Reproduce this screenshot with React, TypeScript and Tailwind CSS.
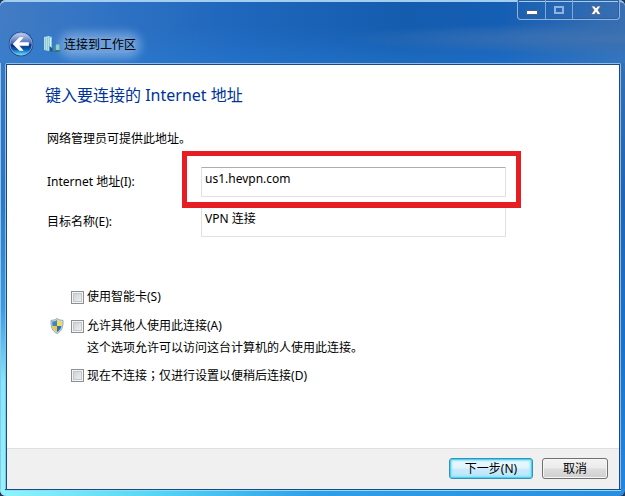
import React from "react";

function BackButton() {
  return (
    <button type="button" aria-label="后退" className="size-[26px] shrink-0">
      <svg viewBox="0 0 26 26" className="size-full">
        <defs>
          <linearGradient id="orb" x1="0" y1="0" x2="0" y2="1">
            <stop offset="0" stopColor="#c4d2ee" />
            <stop offset="0.3" stopColor="#7391cc" />
            <stop offset="0.5" stopColor="#3a62b0" />
            <stop offset="0.53" stopColor="#0a2a7c" />
            <stop offset="0.75" stopColor="#0c5cb8" />
            <stop offset="1" stopColor="#5cecfc" />
          </linearGradient>
        </defs>
        <circle cx="13" cy="13" r="12.3" fill="#1c4688" />
        <circle cx="13" cy="13" r="11.2" fill="url(#orb)" stroke="#8fb0dc" strokeWidth="0.8" />
        <path
          d="M5 13 11.500 6.500h3.600L11 11.400H20.600v3.200H11L15.100 19.500H11.500Z"
          fill="#fff"
          stroke="#fff"
          strokeWidth="0.6"
          strokeLinejoin="round"
        />
      </svg>
    </button>
  );
}

function WorkplaceIcon() {
  return (
    <svg viewBox="0 0 18 18" className="size-[18px] shrink-0" aria-hidden="true">
      <path d="M1 2 6 1v15L1 15Z" fill="#b5dde2" />
      <path d="M6 1 9 2v14L6 16Z" fill="#8ccbe0" />
      <path d="M2.500 3v12M4.500 2.500v12.500" stroke="#8ac6cf" strokeWidth="0.8" />
      <path d="M7.500 3v9" stroke="#d6f3f8" strokeWidth="1" />
      <path d="M6.500 11 9.500 13.500v3.500L6.500 16Z" fill="#1e5a86" />
      <path d="M11 10.500h3v6h-3Z" fill="#3f8e9e" />
      <path d="M13 9.500h3.500V15H13Z" fill="#8fd0c4" />
      <path d="M14 15h3v2h-6v-1Z" fill="#2b6a74" />
    </svg>
  );
}

function ShieldIcon() {
  return (
    <svg viewBox="0 0 14 16" className="h-4 w-[14px] shrink-0" aria-hidden="true">
      <defs>
        <clipPath id="shield">
          <path d="M7 2C5.500 3 3.800 3.500 2.200 3.500 2 8.500 3.300 12.200 7 14c3.700-1.800 5-5.500 4.800-10.500C10.200 3.500 8.500 3 7 2Z" />
        </clipPath>
      </defs>
      <path
        d="M7 .5C5.300 1.800 3.200 2.300 1 2.300.6 8.600 2.200 13.300 7 15.500c4.800-2.200 6.400-6.900 6-13.200C10.800 2.300 8.700 1.800 7 .5Z"
        fill="#ccd8e0"
        stroke="#8497a6"
        strokeWidth="0.8"
      />
      <g clipPath="url(#shield)">
        <path d="M0 0h7v8H0Z" fill="#3a88c8" />
        <path d="M7 0h7v8H7Z" fill="#f4dc54" />
        <path d="M0 8h7v8H0Z" fill="#efcb38" />
        <path d="M7 8h7v8H7Z" fill="#2a70b6" />
      </g>
    </svg>
  );
}

function CaptionButtons() {
  const cell = "flex h-full items-center justify-center";
  return (
    <div className="flex h-5 w-[103px] rounded-b-[4px] border border-t-0 border-[#8db4de] shadow-[inset_0_0_0_1px_#2a5fa2]">
      <button type="button" aria-label="最小化" className={cell + " w-7 border-r border-[#7fa8d4]"}>
        <svg viewBox="0 0 12 12" className="size-3">
          <path d="M.5 6.500h11v4H.5Z" fill="#fff" stroke="#4b5f7c" />
        </svg>
      </button>
      <button type="button" aria-label="最大化" disabled className={cell + " w-[27px] border-r border-[#7fa8d4]"}>
        <svg viewBox="0 0 12 12" className="size-3">
          <path d="M2 3h8v6H2Z" fill="none" stroke="#8fb2e0" strokeWidth="2" />
        </svg>
      </button>
      <button type="button" aria-label="关闭" className={cell + " flex-1"}>
        <svg viewBox="0 0 12 12" className="size-3">
          <path
            d="M1 2h3.500L6 4l1.500-2H11L8 6l3 4.500H7.500L6 8.300 4.500 10.500H1L4 6Z"
            fill="#fff"
            stroke="#4b5f7c"
            strokeWidth="0.8"
          />
        </svg>
      </button>
    </div>
  );
}

function Field({
  id,
  label,
  value,
  highlighted,
}: {
  id: string;
  label: string;
  value: string;
  highlighted?: boolean;
}) {
  return (
    <div className="flex items-center">
      <label htmlFor={id} className="w-[154px] shrink-0">
        {label}
      </label>
      <div className="relative w-[305px]">
        <input
          id={id}
          type="text"
          defaultValue={value}
          className="block h-[30px] w-full rounded-[1px] border border-[#dfe1e6] border-t-[#abadb3] bg-white px-[3px] pb-2 outline-none"
        />
        {highlighted && (
          <div className="pointer-events-none absolute -top-4 -right-[15px] -bottom-[11px] -left-[19px] z-10 border-[5px] border-b-[6px] border-[#e71d24]" />
        )}
      </div>
    </div>
  );
}

function Check({ id, children }: { id: string; children: React.ReactNode }) {
  return (
    <div className="flex h-4 items-center gap-[3px]">
      <input
        id={id}
        type="checkbox"
        className="size-[13px] appearance-none border border-[#8e8f8f] bg-linear-to-br from-[#c6cbd1] to-[#f6f6f6] shadow-[inset_0_0_0_1px_#f4f4f4,inset_0_0_0_2px_#c3c7cc]"
      />
      <label htmlFor={id}>{children}</label>
    </div>
  );
}

export default function App() {
  return (
    <div className="bg-[#23364e] font-['Noto_Sans','Noto_Sans_CJK_SC',sans-serif] text-xs leading-4 text-black">
      <div className="flex min-h-screen flex-col rounded-[6px] bg-[linear-gradient(90deg,#8ff5fb_0%,#55d5f6_25%,#2f9fe8_50%,#2b8ee0_100%)] shadow-[inset_1px_0_0_#9fd4f4]">
        <div className="flex flex-1 flex-col rounded-t-[6px] bg-[linear-gradient(180deg,#3b78c0_0%,#2b75c6_40%,#3a9ae2_63%,#7eeafa_78%,#90f6fb_100%),linear-gradient(180deg,#3d73b2_0%,#2265b4_40%,#1a72cc_70%,#2386de_100%)] bg-[position:left,right] bg-[size:50%_100%,50%_100%] bg-no-repeat pr-1 pl-[5px] shadow-[inset_1px_0_0_#8fc4ec]">
          <header className="-mr-1 -ml-[5px] flex h-[63px] items-start justify-between rounded-t-[6px] border-t-2 border-[#a4cdf2] bg-[radial-gradient(ellipse_at_100%_60%,#4173b0_0%,#3a70b2cc_12%,transparent_32%),linear-gradient(0deg,#2a80d866_0%,transparent_60%),linear-gradient(90deg,#427cc4_0%,#2f72c4_18%,#1e67bc_38%,#145cae_65%,#145eb4_80%,#3a6fb0_100%)] pr-[5px] pl-2">
            <div className="flex items-center pt-[29px]">
              <BackButton />
              <div className="flex items-center gap-[3px] pl-[9px]">
                <WorkplaceIcon />
                <h1 className="mt-px rounded-full bg-[#a9c9ee]/50 shadow-[0_0_8px_5px_rgba(169,201,238,0.5)]">
                  连接到工作区
                </h1>
              </div>
            </div>
            <div className="-mt-[2px]">
              <CaptionButtons />
            </div>
          </header>
          <div className="flex flex-1 flex-col rounded-t-[2px] border border-b-0 border-[#8fbce8]">
            <main className="flex flex-1 flex-col border border-b-0 border-[#174a86] bg-white">
              <form className="flex-1 pl-10" onSubmit={(event) => event.preventDefault()}>
                <h2 className="-ml-[2px] pt-[18px] text-base leading-6 text-[#003399]">键入要连接的 Internet 地址</h2>
                <p className="mt-6">网络管理员可提供此地址。</p>
                <div className="mt-5 flex flex-col gap-[10px]">
                  <Field id="address" label="Internet 地址(I):" value="us1.hevpn.com" highlighted />
                  <Field id="name" label="目标名称(E):" value="VPN 连接" />
                </div>
                <div className="mt-[52px] pl-6">
                  <Check id="smartcard">使用智能卡(S)</Check>
                  <div className="mt-[13px] -ml-[21px] flex gap-[7px]">
                    <ShieldIcon />
                    <Check id="share">允许其他人使用此连接(A)</Check>
                  </div>
                  <p className="mt-[6px] pl-4">这个选项允许可以访问这台计算机的人使用此连接。</p>
                  <div className="mt-[11px]">
                    <Check id="later">
                      现在不连接<span className="font-['Noto_Sans_CJK_TC',sans-serif]">；</span>仅进行设置以便稍后连接(D)
                    </Check>
                  </div>
                </div>
              </form>
              <footer className="flex justify-end gap-[9px] border-t border-[#dfdfdf] bg-[#f0f0f0] pt-[9px] pr-[11px] pb-[10px]">
                <button
                  type="button"
                  className="h-[21px] w-[84px] rounded-[3px] border border-[#3c8fb8] bg-[linear-gradient(#eef9fe_0%,#e0f4fd_48%,#caebfc_52%,#b8e4f9_100%)] leading-[19px] shadow-[inset_0_0_0_1px_#46d4f6,inset_0_0_2px_2px_#8fe2f8]"
                >
                  下一步(N)
                </button>
                <button
                  type="button"
                  className="h-[21px] w-[66px] rounded-[3px] border border-[#707070] bg-[linear-gradient(#f3f3f3_0%,#ebebeb_48%,#dddddd_52%,#cfcfcf_100%)] leading-[19px] shadow-[inset_0_0_0_1px_#f6f6f6]"
                >
                  取消
                </button>
              </footer>
            </main>
          </div>
        </div>
        <div className="h-[7px] rounded-b-[6px] pr-1 pl-[5px]">
          <div className="h-[2px] border-t border-b border-t-[#174a86] border-b-[#8fdcf6]" />
        </div>
      </div>
    </div>
  );
}
